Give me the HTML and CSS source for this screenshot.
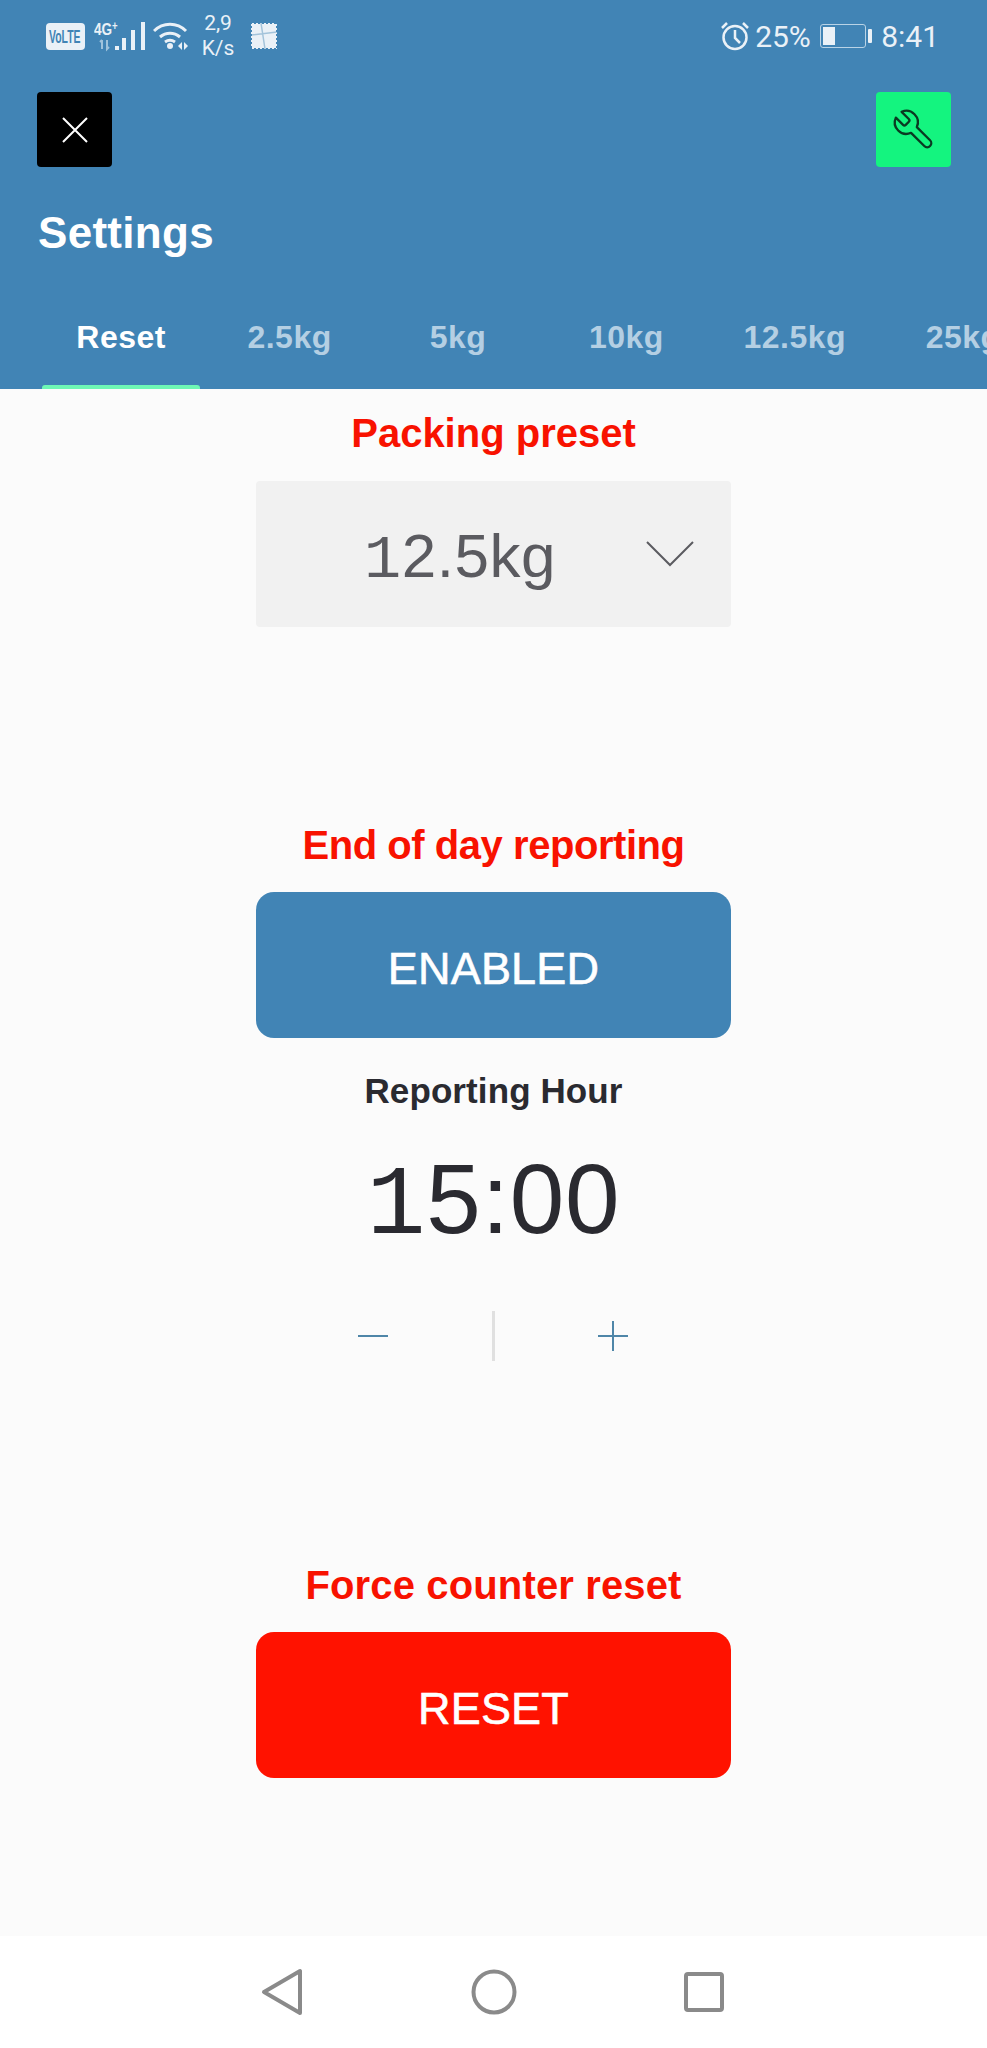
FILE: index.html
```html
<!DOCTYPE html>
<html lang="en">
<head>
  <meta charset="UTF-8">
  <meta name="viewport" content="width=device-width, initial-scale=1.0">
  <title>Settings</title>
  <link rel="stylesheet" href="styles.css">
</head>
<body>
  <header class="header">
    <!-- Status bar -->
    <div class="status">
      <div class="status-side">
        <svg class="volte" width="39" height="27" viewBox="0 0 39 27">
          <rect width="39" height="27" rx="4" fill="#eaf1f7"/>
          <text transform="translate(3 20) scale(0.58 1)" class="volte-text">VoLTE</text>
        </svg>
        <svg class="net" width="52" height="32" viewBox="0 0 52 32">
          <text transform="translate(0 15) scale(0.8 1)" class="net-type">4G<tspan class="net-plus" dy="-5">+</tspan></text>
          <path class="net-arrows" d="M8 20v9M6 22l2-2M13 20v9l2-2"/>
          <rect x="21" y="26" width="4" height="4" fill="#eaf1f7"/>
          <rect x="28" y="18" width="4" height="12" fill="#eaf1f7"/>
          <rect x="37" y="10" width="4" height="20" fill="#eaf1f7"/>
          <rect x="47" y="2" width="4" height="28" fill="#eaf1f7"/>
        </svg>
        <svg class="wifi" width="36" height="30" viewBox="0 0 36 30">
          <path d="M1 10C10 1 24 1 33 10M7 16c6-5 14-5 20 0M12 21c3-2 7-2 10 0" fill="none" stroke="#eaf1f7" stroke-width="3"/>
          <circle cx="17" cy="25" r="3" fill="#eaf1f7"/>
          <path d="M25 25l4-4v8zM31 21l4 4-4 4z" fill="#eaf1f7"/>
        </svg>
        <span class="speed">2,9<br>K/s</span>
        <svg class="flag" width="28" height="28" viewBox="0 0 28 28">
          <rect x="1" y="1" width="26" height="26" fill="#eaf1f7"/>
          <path d="M11 1l4 26M1 13l26-3" fill="none" stroke="#a3c3da" stroke-width="1.500"/>
          <path d="M1 0v28M27 0v28M0 1h28M0 27h28" fill="none" stroke="#4184b5" stroke-width="2" stroke-dasharray="2 2"/>
        </svg>
      </div>
      <div class="status-side">
        <svg class="alarm" width="30" height="30" viewBox="0 0 30 30">
          <circle cx="15" cy="16.500" r="11.500" fill="none" stroke="#eaf1f7" stroke-width="2.500"/>
          <path d="M15 9v8l5 5M2 7l5-5M28 7l-5-5" fill="none" stroke="#eaf1f7" stroke-width="2.500"/>
        </svg>
        <span class="pct">25%</span>
        <span class="battery"><span class="battery-level"></span></span>
        <span class="battery-nub"></span>
        <span class="clock">8:41</span>
      </div>
    </div>

    <!-- Toolbar -->
    <div class="toolbar">
      <button class="square close-btn">
        <svg width="26" height="26" viewBox="0 0 26 26"><path d="M1 1l24 24M25 1L1 25" stroke="#fff" stroke-width="2"/></svg>
      </button>
      <button class="square tool-btn">
        <svg class="wrench" width="46" height="46" viewBox="0 0 24 24"><path d="M14.7 6.3a1 1 0 0 0 0 1.4l1.6 1.6a1 1 0 0 0 1.400 0l3.770-3.770a6 6 0 0 1-7.940 7.940l-6.910 6.910a2.120 2.120 0 0 1-3-3l6.910-6.910a6 6 0 0 1 7.940-7.940l-3.760 3.760z" fill="none" stroke="#0a3a22" stroke-width="1.200" stroke-linejoin="round"/></svg>
      </button>
    </div>

    <h1 class="title">Settings</h1>

    <!-- Tabs -->
    <nav class="tabs">
      <div class="tab active">Reset</div>
      <div class="tab">2.5kg</div>
      <div class="tab">5kg</div>
      <div class="tab">10kg</div>
      <div class="tab">12.5kg</div>
      <div class="tab">25kg</div>
    </nav>
  </header>

  <main class="content">
    <div class="label first">Packing preset</div>
    <div class="select">
      <span class="select-value"><span class="one">1</span>2.5kg</span>
      <svg class="chevron" width="48" height="26" viewBox="0 0 48 26"><path d="M1 1l23 23L47 1" fill="none" stroke="#5b5b60" stroke-width="2"/></svg>
    </div>

    <div class="label gap tight">End of day reporting</div>
    <button class="big-btn enabled">ENABLED</button>

    <div class="sub-label">Reporting Hour</div>
    <div class="time"><span class="one">1</span>5:00</div>
    <div class="stepper">
      <button class="step"><svg width="32" height="32" viewBox="0 0 32 32"><path d="M1 16h30" stroke="#4f86a8" stroke-width="2"/></svg></button>
      <span class="step-line"></span>
      <button class="step step-plus"><svg width="32" height="32" viewBox="0 0 32 32"><path d="M1 16h30M16 1v30" stroke="#4f86a8" stroke-width="2"/></svg></button>
    </div>

    <div class="label gap last">Force counter reset</div>
    <button class="big-btn reset">RESET</button>
  </main>

  <!-- Android nav -->
  <footer class="nav">
    <svg width="44" height="50" viewBox="0 0 44 50"><path d="M3 25L39 4v42z" fill="none" stroke="#8a8a8a" stroke-width="4" stroke-linejoin="round"/></svg>
    <svg width="46" height="46" viewBox="0 0 46 46"><circle cx="23" cy="23" r="20.500" fill="none" stroke="#8a8a8a" stroke-width="4"/></svg>
    <svg width="42" height="42" viewBox="0 0 42 42"><rect x="3" y="3" width="36" height="36" rx="2" fill="none" stroke="#8a8a8a" stroke-width="4"/></svg>
  </footer>
</body>
</html>
```

FILE: styles.css
```css
html {
	background-color: #fbfbfb;
}

body {
	margin: 0;
	padding: 0;
	height: 2048px;
	overflow: hidden;
	display: flex;
	flex-direction: column;
	font-family: "Liberation Sans", Arial, sans-serif;
}

button {
	border: none;
	padding: 0;
	font-family: inherit;
}

.header {
	height: 389px;
	flex: none;
	background-color: #4184b5;
	color: #fff;
	overflow: hidden;
}

/* status bar */
.status {
	height: 56px;
	padding: 16px 48px 0 46px;
	box-sizing: border-box;
	display: flex;
	justify-content: space-between;
	color: #eaf1f7;
	font-family: Roboto, sans-serif;
}

.status-side {
	display: flex;
	align-items: center;
	height: 40px;
}

.volte-text {
	font-family: "Liberation Sans", sans-serif;
	font-size: 18px;
	font-weight: 700;
	fill: #4184b5;
}

.net {
	margin-left: 9px;
}

.net-type {
	font-family: "Liberation Sans", sans-serif;
	font-size: 17px;
	font-weight: 700;
	fill: #eaf1f7;
}

.net-plus {
	font-size: 12px;
}

.net-arrows {
	fill: none;
	stroke: #9fc3dc;
	stroke-width: 2;
}

.wifi {
	margin-left: 7px;
}

.speed {
	margin-left: 12px;
	font-size: 21px;
	line-height: 25px;
	width: 34px;
	text-align: center;
}

.flag {
	margin-left: 15px;
}

.alarm {
	margin-right: 5px;
}

.pct {
	font-size: 30px;
	width: 60px;
}

.battery {
	width: 46px;
	height: 24px;
	box-sizing: border-box;
	border: 1px solid #b9d3e6;
	border-radius: 3px;
	padding: 2px;
	margin-left: 5px;
}

.battery-level {
	display: block;
	width: 12px;
	height: 18px;
	background-color: #eaf1f7;
}

.battery-nub {
	width: 4px;
	height: 14px;
	margin-left: 2px;
	border-radius: 1px;
	background-color: #eaf1f7;
}

.clock {
	margin-left: 9px;
	font-size: 30px;
}

/* toolbar */
.toolbar {
	margin-top: 36px;
	padding: 0 36px 0 37px;
	display: flex;
	justify-content: space-between;
}

.square {
	width: 75px;
	height: 75px;
	border-radius: 4px;
	display: flex;
	align-items: center;
	justify-content: center;
}

.close-btn {
	background-color: #000;
}

.tool-btn {
	background-color: #14f47f;
}

.wrench {
	transform: scaleX(-1);
}

.title {
	margin: 41px 0 0 38px;
	font-size: 44px;
	line-height: 50px;
	font-weight: 700;
	letter-spacing: 0.3px;
}

/* tabs */
.tabs {
	margin-top: 47px;
	padding-left: 37px;
	display: flex;
}

.tab {
	flex: none;
	width: 168.4px;
	box-sizing: border-box;
	height: 84px;
	padding-top: 12px;
	text-align: center;
	font-size: 32px;
	line-height: 40px;
	font-weight: 700;
	letter-spacing: 0.5px;
	color: #b4cfe3;
	position: relative;
}

.tab.active {
	color: #fff;
}

.tab.active::after {
	content: "";
	position: absolute;
	left: 5px;
	right: 5px;
	bottom: 0;
	height: 4px;
	border-radius: 3px 3px 0 0;
	background-color: #6ef7b5;
}

/* content */
.content {
	flex: 1;
	display: flex;
	flex-direction: column;
	align-items: center;
}

.label {
	font-size: 40px;
	line-height: 48px;
	font-weight: 700;
	color: #f81200;
}

.label.first {
	margin-top: 20px;
}

.label.gap {
	margin-top: 194px;
}

.label.last {
	margin-top: 200px;
	letter-spacing: 0.14px;
}

.label.tight {
	letter-spacing: -0.45px;
}

.select {
	width: 475px;
	height: 146px;
	margin-top: 24px;
	border-radius: 4px;
	background-color: #f1f1f1;
	display: flex;
	align-items: center;
	position: relative;
}

.select-value {
	margin-left: 108px;
	padding-top: 2px;
	font-size: 62px;
	letter-spacing: 0.5px;
	color: #5b5b60;
}

.chevron {
	position: absolute;
	right: 37px;
	top: 60px;
}

.big-btn {
	display: block;
	width: 475px;
	height: 146px;
	margin-top: 23px;
	padding-top: 8px;
	border-radius: 18px;
	font-size: 45px;
	letter-spacing: 0.2px;
	color: #fff;
	-webkit-text-stroke: 0.6px #fff;
}

.enabled {
	background-color: #4184b5;
}

.reset {
	background-color: #ff1200;
}

.sub-label {
	margin-top: 31px;
	font-size: 35px;
	line-height: 44px;
	font-weight: 700;
	letter-spacing: 0.1px;
	color: #2a2a30;
}

.time {
	margin-top: 31px;
	height: 110px;
	font-size: 98px;
	line-height: 110px;
	letter-spacing: 0.8px;
	color: #2a2a30;
}

/* the 1 in the reference has a slab foot */
.one {
	font-family: "Liberation Mono", monospace;
	line-height: 0;
}

.stepper {
	margin-top: 57px;
	height: 50px;
	display: flex;
	align-items: center;
}

.step {
	width: 238px;
	height: 50px;
	background: none;
	display: flex;
	align-items: center;
	justify-content: center;
}

.step-plus {
	padding-right: 3px;
}

.step-line {
	width: 3px;
	height: 50px;
	background-color: #e0e0e0;
}

.nav {
	height: 112px;
	flex: none;
	background-color: #fff;
	box-sizing: border-box;
	padding: 0 262px 0 261px;
	display: flex;
	justify-content: space-between;
	align-items: center;
}

.nav svg {
	margin-bottom: 0;
}
```
